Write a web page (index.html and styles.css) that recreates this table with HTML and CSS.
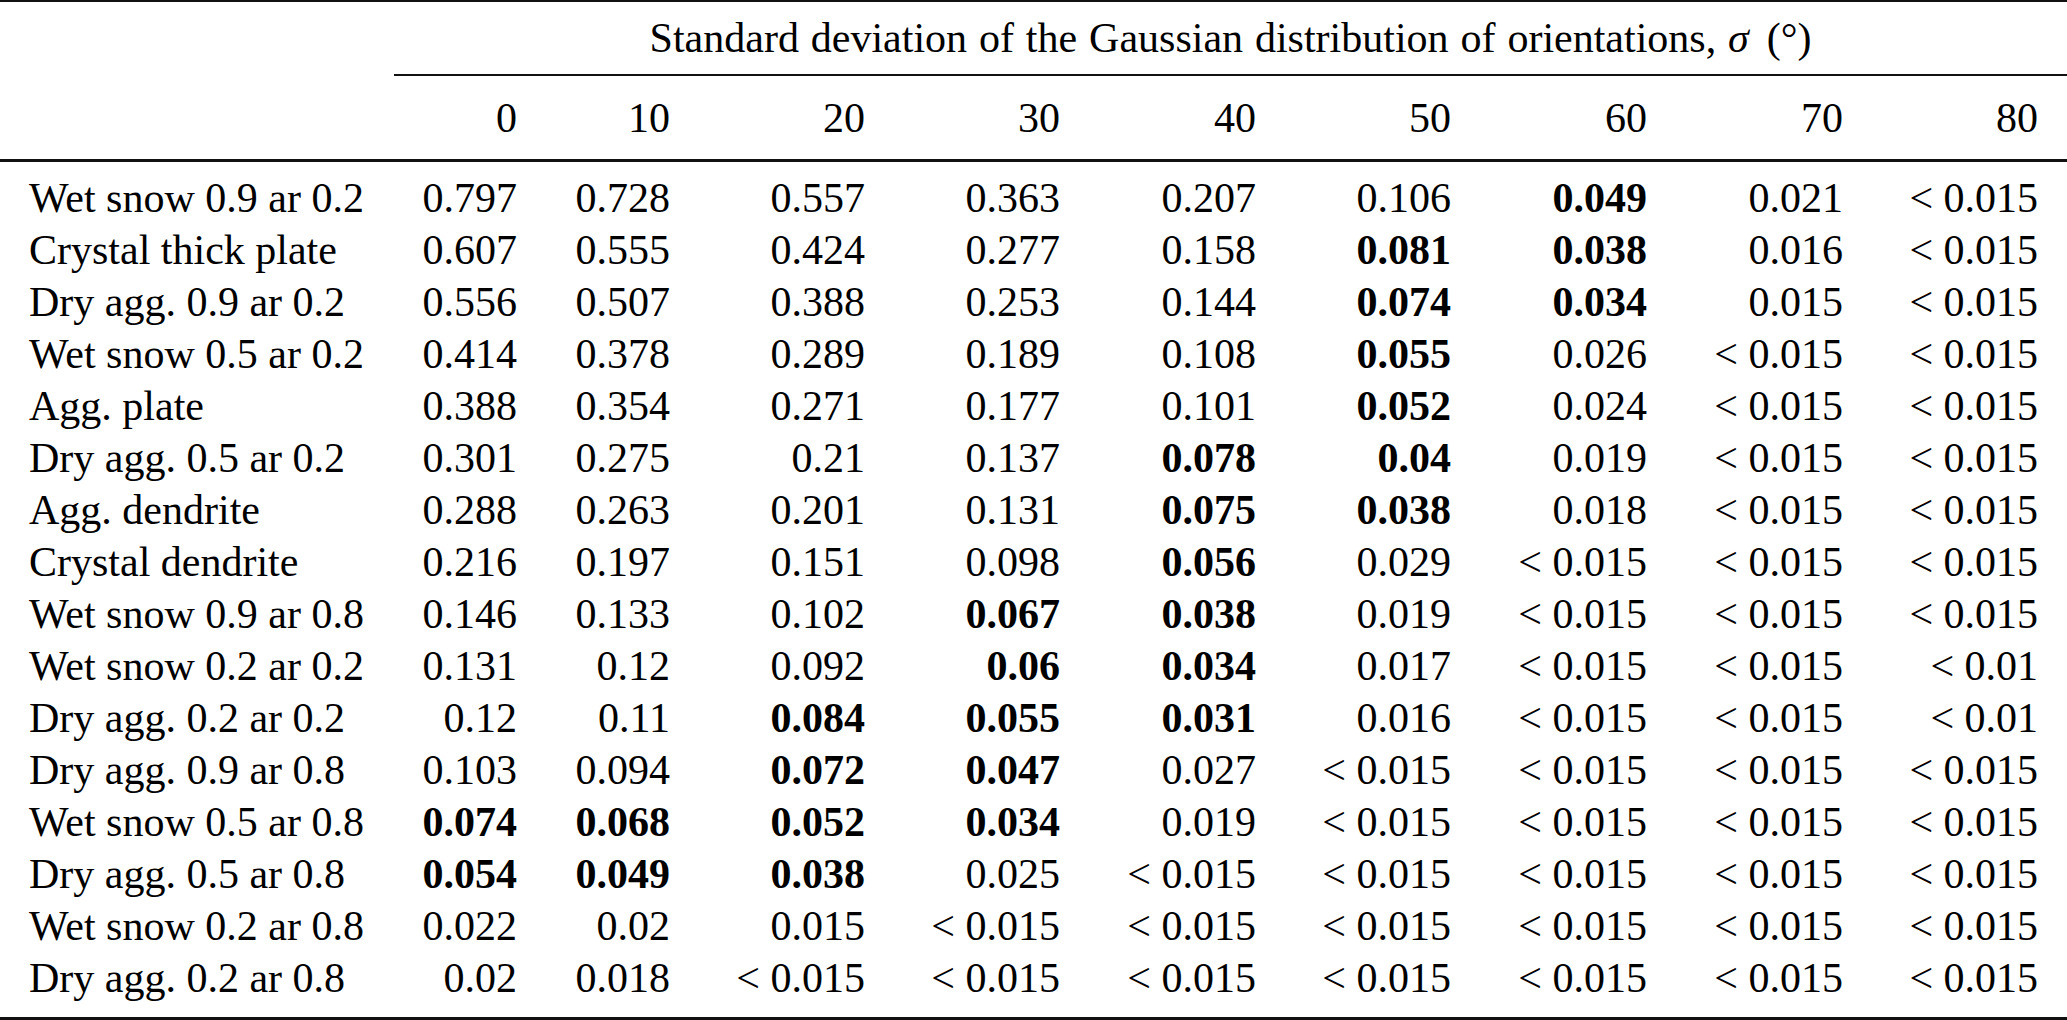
FILE: index.html
```html
<!DOCTYPE html>
<html>
<head>
<meta charset="utf-8">
<link rel="stylesheet" href="styles.css">
</head>
<body>
<table class="tbl">
<colgroup>
<col class="c-label"><col class="c-n1"><col class="c-n2"><col class="c-w"><col class="c-w"><col class="c-w2"><col class="c-w"><col class="c-w2"><col class="c-w2"><col class="c-w">
</colgroup>
<thead>
<tr class="h1">
<th class="blank"></th>
<th class="span" colspan="9">Standard deviation of the Gaussian distribution of orientations, <span class="sig">σ</span> (°)</th>
</tr>
<tr class="h2">
<th class="blank"></th>
<th>0</th><th>10</th><th>20</th><th>30</th><th>40</th><th>50</th><th>60</th><th>70</th><th>80</th>
</tr>
</thead>
<tbody>
<tr class="first"><td>Wet snow 0.9 ar 0.2</td><td>0.797</td><td>0.728</td><td>0.557</td><td>0.363</td><td>0.207</td><td>0.106</td><td class="b">0.049</td><td>0.021</td><td>&lt; 0.015</td></tr>
<tr><td>Crystal thick plate</td><td>0.607</td><td>0.555</td><td>0.424</td><td>0.277</td><td>0.158</td><td class="b">0.081</td><td class="b">0.038</td><td>0.016</td><td>&lt; 0.015</td></tr>
<tr><td>Dry agg. 0.9 ar 0.2</td><td>0.556</td><td>0.507</td><td>0.388</td><td>0.253</td><td>0.144</td><td class="b">0.074</td><td class="b">0.034</td><td>0.015</td><td>&lt; 0.015</td></tr>
<tr><td>Wet snow 0.5 ar 0.2</td><td>0.414</td><td>0.378</td><td>0.289</td><td>0.189</td><td>0.108</td><td class="b">0.055</td><td>0.026</td><td>&lt; 0.015</td><td>&lt; 0.015</td></tr>
<tr><td>Agg. plate</td><td>0.388</td><td>0.354</td><td>0.271</td><td>0.177</td><td>0.101</td><td class="b">0.052</td><td>0.024</td><td>&lt; 0.015</td><td>&lt; 0.015</td></tr>
<tr><td>Dry agg. 0.5 ar 0.2</td><td>0.301</td><td>0.275</td><td>0.21</td><td>0.137</td><td class="b">0.078</td><td class="b">0.04</td><td>0.019</td><td>&lt; 0.015</td><td>&lt; 0.015</td></tr>
<tr><td>Agg. dendrite</td><td>0.288</td><td>0.263</td><td>0.201</td><td>0.131</td><td class="b">0.075</td><td class="b">0.038</td><td>0.018</td><td>&lt; 0.015</td><td>&lt; 0.015</td></tr>
<tr><td>Crystal dendrite</td><td>0.216</td><td>0.197</td><td>0.151</td><td>0.098</td><td class="b">0.056</td><td>0.029</td><td>&lt; 0.015</td><td>&lt; 0.015</td><td>&lt; 0.015</td></tr>
<tr><td>Wet snow 0.9 ar 0.8</td><td>0.146</td><td>0.133</td><td>0.102</td><td class="b">0.067</td><td class="b">0.038</td><td>0.019</td><td>&lt; 0.015</td><td>&lt; 0.015</td><td>&lt; 0.015</td></tr>
<tr><td>Wet snow 0.2 ar 0.2</td><td>0.131</td><td>0.12</td><td>0.092</td><td class="b">0.06</td><td class="b">0.034</td><td>0.017</td><td>&lt; 0.015</td><td>&lt; 0.015</td><td>&lt; 0.01</td></tr>
<tr><td>Dry agg. 0.2 ar 0.2</td><td>0.12</td><td>0.11</td><td class="b">0.084</td><td class="b">0.055</td><td class="b">0.031</td><td>0.016</td><td>&lt; 0.015</td><td>&lt; 0.015</td><td>&lt; 0.01</td></tr>
<tr><td>Dry agg. 0.9 ar 0.8</td><td>0.103</td><td>0.094</td><td class="b">0.072</td><td class="b">0.047</td><td>0.027</td><td>&lt; 0.015</td><td>&lt; 0.015</td><td>&lt; 0.015</td><td>&lt; 0.015</td></tr>
<tr><td>Wet snow 0.5 ar 0.8</td><td class="b">0.074</td><td class="b">0.068</td><td class="b">0.052</td><td class="b">0.034</td><td>0.019</td><td>&lt; 0.015</td><td>&lt; 0.015</td><td>&lt; 0.015</td><td>&lt; 0.015</td></tr>
<tr><td>Dry agg. 0.5 ar 0.8</td><td class="b">0.054</td><td class="b">0.049</td><td class="b">0.038</td><td>0.025</td><td>&lt; 0.015</td><td>&lt; 0.015</td><td>&lt; 0.015</td><td>&lt; 0.015</td><td>&lt; 0.015</td></tr>
<tr><td>Wet snow 0.2 ar 0.8</td><td>0.022</td><td>0.02</td><td>0.015</td><td>&lt; 0.015</td><td>&lt; 0.015</td><td>&lt; 0.015</td><td>&lt; 0.015</td><td>&lt; 0.015</td><td>&lt; 0.015</td></tr>
<tr class="last"><td>Dry agg. 0.2 ar 0.8</td><td>0.02</td><td>0.018</td><td>&lt; 0.015</td><td>&lt; 0.015</td><td>&lt; 0.015</td><td>&lt; 0.015</td><td>&lt; 0.015</td><td>&lt; 0.015</td><td>&lt; 0.015</td></tr>
</tbody>
</table>
</body>
</html>
```
FILE: styles.css
```css
html, body {
  margin: 0;
  padding: 0;
  background: #ffffff;
}
body {
  font-family: "Liberation Serif", "Times New Roman", serif;
  font-size: 42px;
  color: #000000;
}
.tbl {
  width: 2067px;
  border-collapse: collapse;
  table-layout: fixed;
  border-top: 2px solid #111;
  border-bottom: 3px solid #111;
}
.c-label { width: 394px; }
.c-n1 { width: 152px; }
.c-n2 { width: 153px; }
.c-w { width: 195px; }
.c-w2 { width: 196px; }

th, td {
  padding: 0 29px 0 0;
  text-align: right;
  font-weight: normal;
  white-space: nowrap;
  line-height: 52px;
}
.h1 th {
  height: 72px;
  padding-top: 0;
  vertical-align: middle;
}
.h1 .span {
  text-align: center;
  padding-right: 0;
  border-bottom: 2px solid #111;
  word-spacing: 1.4px;
}
.sig {
  font-style: italic;
  padding-right: 6px;
}
.h2 th {
  height: 83px;
  border-bottom: 3px solid #111;
  vertical-align: middle;
}
.h2 .blank { border-bottom: 3px solid #111; }
td:first-child {
  text-align: left;
  padding-left: 29px;
  padding-right: 0;
}
tbody td {
  height: 52px;
}
tbody tr.first td { padding-top: 10px; }
tbody tr.last td { padding-bottom: 13px; }
.b { font-weight: bold; }
```
